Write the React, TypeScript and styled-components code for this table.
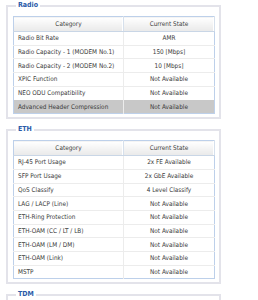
import styled, { createGlobalStyle } from "styled-components";

type Row = { name: string; value: string; selected?: boolean };

const radioRows: Row[] = [
  { name: "Radio Bit Rate", value: "AMR" },
  { name: "Radio Capacity - 1 (MODEM No.1)", value: "150 [Mbps]" },
  { name: "Radio Capacity - 2 (MODEM No.2)", value: "10 [Mbps]" },
  { name: "XPIC Function", value: "Not Available" },
  { name: "NEO ODU Compatibility", value: "Not Available" },
  { name: "Advanced Header Compression", value: "Not Available", selected: true },
];

const ethRows: Row[] = [
  { name: "RJ-45 Port Usage", value: "2x FE Available" },
  { name: "SFP Port Usage", value: "2x GbE Available" },
  { name: "QoS Classify", value: "4 Level Classify" },
  { name: "LAG / LACP (Line)", value: "Not Available" },
  { name: "ETH-Ring Protection", value: "Not Available" },
  { name: "ETH-OAM (CC / LT / LB)", value: "Not Available" },
  { name: "ETH-OAM (LM / DM)", value: "Not Available" },
  { name: "ETH-OAM (Link)", value: "Not Available" },
  { name: "MSTP", value: "Not Available" },
];

export default function App() {
  return (
    <>
      <GlobalStyle />
      <Page>
        <Section title="Radio" rows={radioRows} />
        <Section title="ETH" rows={ethRows} />
        <Section title="TDM" />
      </Page>
    </>
  );
}

function Section({ title, rows }: { title: string; rows?: Row[] }) {
  return (
    <Group>
      <Legend>{title}</Legend>
      {rows ? (
        <Table>
          <thead>
            <tr>
              <HeadCell $w={109}>Category</HeadCell>
              <HeadCell>Current State</HeadCell>
            </tr>
          </thead>
          <tbody>
            {rows.map((r) => (
              <BodyRow key={r.name} $selected={r.selected}>
                <NameCell>{r.name}</NameCell>
                <ValueCell>{r.value}</ValueCell>
              </BodyRow>
            ))}
          </tbody>
        </Table>
      ) : (
        <Loading />
      )}
    </Group>
  );
}

const GlobalStyle = createGlobalStyle`
  html, body {
    margin: 0;
    padding: 0;
    background: #ffffff;
  }
  body {
    font-family: "DejaVu Sans", "Liberation Sans", sans-serif;
    font-stretch: condensed;
  }
`;

const Page = styled.div`
  display: flex;
  flex-direction: column;
  gap: 6px;
  width: 215px;
  padding: 1px 0 0 6px;
`;

const Group = styled.fieldset`
  margin: 0;
  padding: 6px 5px 3px 5px;
  border: 2px solid #e3e3ea;
  min-width: 0;
`;

const Legend = styled.legend`
  margin-left: 3px;
  padding: 0 2px;
  font-size: 7px;
  font-weight: bold;
  line-height: 9px;
  color: #2a5aa8;
`;

const Loading = styled.div`
  height: 40px;
`;

const Table = styled.table`
  width: 202px;
  border-collapse: collapse;
  border: 1px solid #bdd0ea;
  table-layout: fixed;
  font-size: 6.4px;
  color: #3a3a3a;
`;

const HeadCell = styled.th<{ $w?: number }>`
  width: ${(p) => (p.$w ? `${p.$w}px` : "auto")};
  height: 14px;
  padding: 0;
  font-weight: normal;
  text-align: center;
  color: #444;
  background: linear-gradient(#ffffff, #e9e9e9);
  border-bottom: 1px solid #c9d6e6;
  border-right: 1px solid #d6e0ec;
  box-shadow: inset -1px 0 0 #ffffff;
`;

const BodyRow = styled.tr<{ $selected?: boolean }>`
  height: 13.7px;
  background: ${(p) => (p.$selected ? "#c8c8c8" : "#ffffff")};
  & + & td {
    border-top: 1px solid #ececec;
  }
`;

const NameCell = styled.td`
  padding: 0 0 0 4px;
  text-align: left;
  white-space: nowrap;
  border-right: 1px solid #ececec;
`;

const ValueCell = styled.td`
  padding: 0;
  text-align: center;
  white-space: nowrap;
`;
